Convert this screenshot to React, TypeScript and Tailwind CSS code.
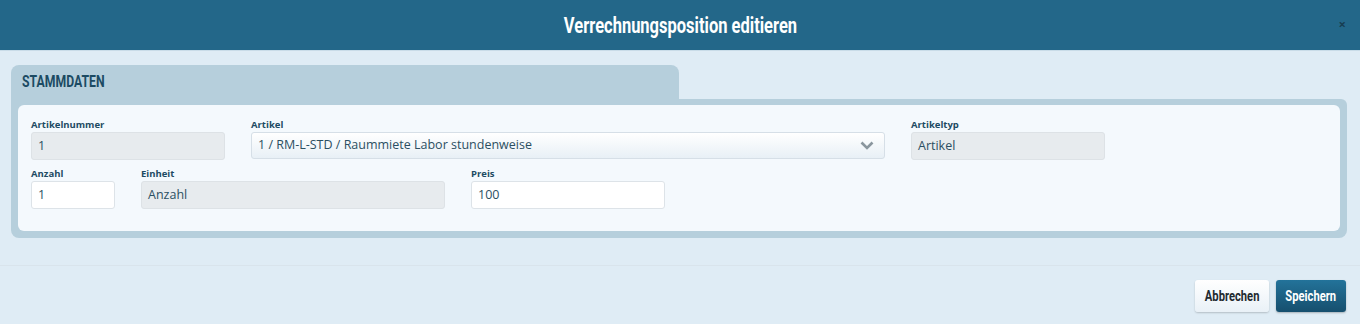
import React from "react";

const cond = "font-['Roboto',sans-serif]";
const sans = "font-['Open_Sans',sans-serif]";

function Label({ children }: { children: React.ReactNode }) {
  return <div className={`${sans} text-[9.5px] font-bold leading-[11px] text-[#1d4b63] mb-[2px]`}>{children}</div>;
}

function ReadOnly({ value, w }: { value: string; w: string }) {
  return (
    <div className={`${w} h-[28px] rounded-[3px] border border-[#dde2e6] bg-[#e7ebee] px-[6px] flex items-center ${sans} text-[12.5px] text-[#2c4f62]`}>
      {value}
    </div>
  );
}

function Input({ value, w }: { value: string; w: string }) {
  return (
    <div className={`${w} h-[28px] rounded-[3px] border border-[#dde3e8] bg-white px-[6px] flex items-center ${sans} text-[12.5px] text-[#2c4f62]`}>
      {value}
    </div>
  );
}

export default function App() {
  return (
    <div className="w-[1360px] h-[324px] bg-[#dfecf5] flex flex-col overflow-hidden">
      <div className="h-[51px] bg-[#236789] border-b border-[#c9dce8] relative flex items-center justify-center">
        <span className={`${cond} inline-block font-bold text-white text-[22px] scale-x-[0.75]`}>Verrechnungsposition editieren</span>
        <div className="absolute right-[14px] top-[18px] text-[#173d52] text-[13px] font-bold leading-none">×</div>
      </div>

      <div className="px-[11px] pt-[14px]">
        <div className="w-[668px] h-[34px] bg-[#b6cfdc] rounded-t-[8px] flex items-center pl-[11px]">
          <span className={`${cond} inline-block origin-left font-bold text-[17px] text-[#1c4b63] scale-x-[0.72]`}>STAMMDATEN</span>
        </div>
        <div className="w-[1336px] bg-[#b6cfdc] rounded-b-[8px] rounded-tr-[6px] p-[7px] pt-[6px]">
          <div className="bg-[#f4f9fd] rounded-[6px] h-[126px] pl-[13px] pt-[14px] flex flex-col gap-[8px]">
            <div className="flex gap-[26px]">
              <div>
                <Label>Artikelnummer</Label>
                <ReadOnly value="1" w="w-[194px]" />
              </div>
              <div>
                <Label>Artikel</Label>
                <div className={`w-[634px] h-[27px] rounded-[3px] border border-[#d6dfe7] bg-gradient-to-b from-white to-[#e8f0f6] px-[6px] flex items-center justify-between ${sans} text-[12.5px] text-[#2c4f62]`}>
                  <span>1 / RM-L-STD / Raummiete Labor stundenweise</span>
                  <svg width="14" height="9" viewBox="0 0 14 9" className="mr-[4px]">
                    <path d="M1.5 1.5 L7 7 L12.5 1.5" fill="none" stroke="#8a969e" strokeWidth="2.6" />
                  </svg>
                </div>
              </div>
              <div>
                <Label>Artikeltyp</Label>
                <ReadOnly value="Artikel" w="w-[194px]" />
              </div>
            </div>
            <div className="flex gap-[26px]">
              <div>
                <Label>Anzahl</Label>
                <Input value="1" w="w-[84px]" />
              </div>
              <div>
                <Label>Einheit</Label>
                <ReadOnly value="Anzahl" w="w-[304px]" />
              </div>
              <div>
                <Label>Preis</Label>
                <Input value="100" w="w-[194px]" />
              </div>
            </div>
          </div>
        </div>
      </div>

      <div className="mt-[27px] border-t border-[#d9e4ec] flex justify-end gap-[7px] pr-[14px] pt-[14px]">
        <button className={`h-[32px] w-[74px] rounded-[3px] bg-gradient-to-b from-white to-[#e9f1f7] shadow-[0_1px_2px_rgba(0,0,0,0.2)] flex items-center justify-center`}>
          <span className={`${cond} inline-block font-bold text-[14px] text-[#1f2a30] scale-x-[0.8]`}>Abbrechen</span>
        </button>
        <button className={`h-[32px] w-[70px] rounded-[3px] bg-gradient-to-b from-[#23739a] to-[#164f6e] shadow-[0_1px_2px_rgba(0,0,0,0.25)] flex items-center justify-center`}>
          <span className={`${cond} inline-block font-bold text-[14px] text-white scale-x-[0.8]`}>Speichern</span>
        </button>
      </div>
    </div>
  );
}
